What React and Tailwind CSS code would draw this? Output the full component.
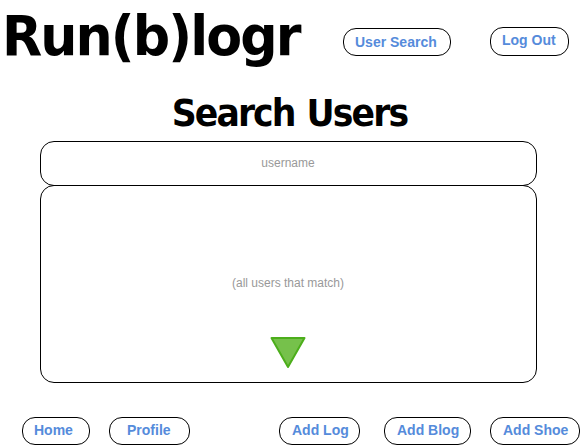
const heading = 'font-["DejaVu_Sans",sans-serif] font-bold text-black whitespace-nowrap scale-x-95';

function PillButton({ className, children }) {
  return (
    <button
      type="button"
      className={`flex shrink-0 items-start whitespace-nowrap rounded-[13px] border border-black bg-white text-left text-[14px] leading-4 font-bold text-[#558bdb] ${className}`}
    >
      {children}
    </button>
  );
}

export default function App() {
  return (
    <div className='flex h-[445px] w-[586px] flex-col overflow-hidden bg-white font-["Liberation_Sans",Arial,sans-serif]'>
      <header className="flex h-[85px] shrink-0 items-start">
        <h1 className={`w-[343px] shrink-0 origin-left pt-[4px] pl-[2px] text-[55px] leading-[64px] tracking-[-2px] ${heading}`}>
          Run(b)logr
        </h1>
        <PillButton className="mt-[28px] h-[28px] w-[108px] pt-[5px] pl-[11px]">User Search</PillButton>
        <PillButton className="mt-[27px] ml-[39px] h-[29px] w-[79px] pt-[4px] pl-[11px]">Log Out</PillButton>
      </header>

      <main className="ml-[40px] flex w-[497px] shrink-0 flex-col">
        <h2 className={`h-[56px] pt-[7px] pl-[2px] text-center text-[36.5px] leading-[43px] tracking-[-2px] [word-spacing:2px] ${heading}`}>
          Search Users
        </h2>
        <div className="flex h-[45px] items-center justify-center rounded-[14px] border border-black pr-px pb-[2px] text-[12px] text-[#999]">
          username
        </div>
        <div className="-mt-px flex h-[198px] flex-col items-center rounded-[14px] border border-black pr-px text-[12px] text-[#999]">
          <p className="mt-[89px] leading-4">(all users that match)</p>
          <svg className="mt-[45px] mr-px block" width="38" height="34" viewBox="0 0 38 34">
            <path d="M2.5 2H35.5L19 31Z" fill="#76c14b" stroke="#4cae1b" strokeWidth="2" strokeLinejoin="round" />
          </svg>
        </div>
      </main>

      <nav className="mt-[34px] flex shrink-0 pl-[22px]">
        <PillButton className="h-[28px] w-[68px] pt-[4px] pl-[11px]">Home</PillButton>
        <PillButton className="ml-[19px] h-[28px] w-[81px] pt-[4px] pl-[17px]">Profile</PillButton>
        <PillButton className="ml-[89px] h-[28px] w-[81px] pt-[4px] pl-[12px]">Add Log</PillButton>
        <PillButton className="ml-[24px] h-[28px] w-[87px] pt-[4px] pl-[12px]">Add Blog</PillButton>
        <PillButton className="ml-[19px] h-[28px] w-[90px] pt-[4px] pl-[12px]">Add Shoe</PillButton>
      </nav>
    </div>
  );
}
